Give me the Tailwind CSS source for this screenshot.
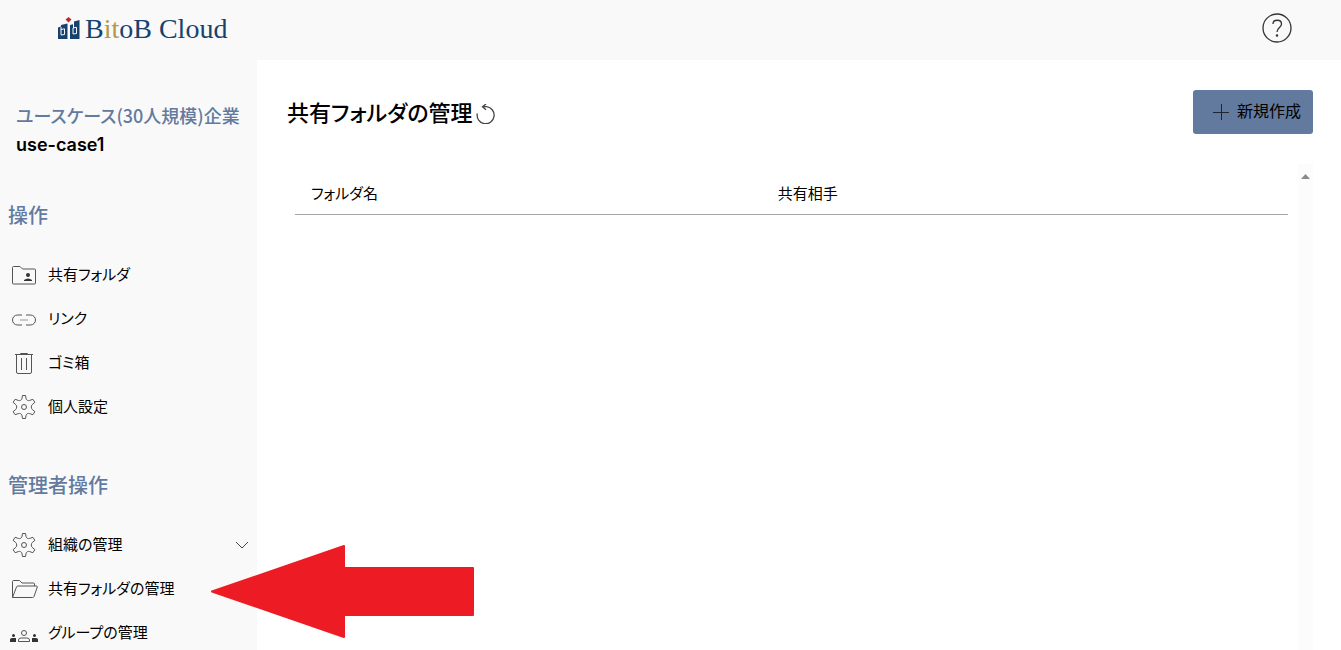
<!DOCTYPE html>
<html lang="ja">
<head>
    <meta charset="UTF-8">
    <meta name="viewport" content="width=device-width, initial-scale=1.0">
    <title>共有フォルダの管理 - BitoB Cloud</title>
    <script src="https://cdn.jsdelivr.net/npm/@tailwindcss/browser@4"></script>
</head>
<body class="h-screen overflow-hidden flex flex-col bg-white text-black font-['Noto_Sans_CJK_JP',sans-serif] [font-feature-settings:'palt']">
    <header class="h-[60px] shrink-0 flex items-center justify-between bg-[#f9f9f9] pl-[57px] pr-12">
        <a href="#" class="flex items-center gap-1 pb-0.5">
            <svg class="w-6 h-6" viewBox="0 0 24 24" aria-hidden="true">
                <path fill="#17426f" d="M1 10.500l3-1V8l6.500-1.500v15.500H1zM13 8l4-1V4.500L22.500 3v19H13z"/>
                <path fill="none" stroke="#f9f9f9" d="M4 18v-5.500l3.500-.7v5.700zM16 17v-6l3.500-.7v6.200zM16.500 7v4M4 10v3"/>
                <path fill="#c1272d" d="M11.500 0l3 2.500-3 3-3-3z"/>
            </svg>
            <span class="font-['Liberation_Serif',serif] text-[28px] leading-8 text-[#17426f]">B<span class="text-[#b39a45]">it</span>oB Cloud</span>
        </a>
        <button type="button" aria-label="ヘルプ" class="pb-1">
            <svg class="w-8 h-8" viewBox="0 0 32 32" fill="none" stroke="#333" stroke-width="1.300">
                <circle cx="16" cy="16" r="14"/>
                <path d="M12 12c0-5 8.500-5 8.500 0 0 3.500-4.500 3.500-4.500 8"/>
                <circle cx="16" cy="23.500" r=".6" fill="#333"/>
            </svg>
        </button>
    </header>

    <div class="flex flex-1 min-h-0">
        <aside class="w-[257px] shrink-0 overflow-hidden bg-[#f9f9f9] pt-10 text-[15px]">
            <div class="pl-4 text-lg leading-[30px] whitespace-nowrap">
                <p class="font-medium text-[#637a9f]">ユースケース(30人規模)企業</p>
                <p class="font-semibold font-['Inter',sans-serif]">use-case1</p>
            </div>

            <h2 class="mt-10 pl-2 text-xl leading-[30px] font-medium text-[#637a9f]">操作</h2>
            <ul class="mt-[23px]">
                <li>
                    <a href="#" class="h-11 flex items-center gap-3 pl-3">
                        <svg class="w-6 h-6" viewBox="0 0 24 24" fill="none" stroke="#555">
                            <path d="M.5 5V4.500q0-1 1-1h6.500l2.500 2.500h12q1 0 1 1v13q0 1-1 1h-21q-1 0-1-1z"/>
                            <circle cx="16" cy="12" r="2" fill="#333" stroke="none"/>
                            <path fill="#333" stroke="none" d="M12 18v-1q4-3 8 0v1z"/>
                        </svg>
                        <span class="pb-0.5">共有フォルダ</span>
                    </a>
                </li>
                <li>
                    <a href="#" class="h-11 flex items-center gap-3 pl-3">
                        <svg class="w-6 h-6" viewBox="0 0 24 24" fill="none" stroke="#555">
                            <path d="M10 8H5.500a5 5 0 0 0 0 10H10M14 8h4.500a5 5 0 0 1 0 10H14"/>
                            <path stroke="#999" d="M8 13h8"/>
                        </svg>
                        <span class="pb-0.5">リンク</span>
                    </a>
                </li>
                <li>
                    <a href="#" class="h-11 flex items-center gap-3 pl-3">
                        <svg class="w-6 h-6" viewBox="0 0 24 24" fill="none" stroke="#555">
                            <path d="M3 3.500h18M8.500 3.500v-1h7v1M4.500 4v17q0 1.500 1.500 1.500h12q1.500 0 1.500-1.500V4M9.500 7v12M14.500 7v12"/>
                        </svg>
                        <span class="pb-0.5">ゴミ箱</span>
                    </a>
                </li>
                <li>
                    <a href="#" class="h-11 flex items-center gap-3 pl-3">
                        <svg class="w-6 h-6" viewBox="0 0 24 24" fill="none" stroke="#555" stroke-linejoin="round">
                            <path d="M10.500.5h3l.6 3.300q.3 1 1.300 1.500 1 .6 2 .2l3.500-1.200 2 3-2.700 2.300q-.9.900-.9 2.400t.9 2.400l2.700 2.300-2 3-3.500-1.200q-1-.4-2 .2-1 .5-1.300 1.500l-.6 3.300h-3l-.6-3.300q-.3-1-1.300-1.500-1-.6-2-.2l-3.500 1.200-2-3 2.700-2.300q.9-.9.9-2.400t-.9-2.400L1.100 7.300l2-3 3.500 1.200q1 .4 2-.2 1-.5 1.300-1.500z"/>
                            <circle cx="12" cy="12" r="2.500"/>
                        </svg>
                        <span class="pb-0.5">個人設定</span>
                    </a>
                </li>
            </ul>

            <h2 class="mt-[41px] pl-2 text-xl leading-[30px] font-medium text-[#637a9f]">管理者操作</h2>
            <ul class="mt-[23px]">
                <li>
                    <button type="button" class="w-full h-11 flex items-center gap-3 pl-3 pr-2">
                        <svg class="w-6 h-6" viewBox="0 0 24 24" fill="none" stroke="#555" stroke-linejoin="round">
                            <path d="M10.500.5h3l.6 3.300q.3 1 1.300 1.500 1 .6 2 .2l3.500-1.200 2 3-2.700 2.300q-.9.900-.9 2.400t.9 2.400l2.700 2.300-2 3-3.500-1.200q-1-.4-2 .2-1 .5-1.300 1.500l-.6 3.300h-3l-.6-3.300q-.3-1-1.300-1.500-1-.6-2-.2l-3.500 1.200-2-3 2.700-2.300q.9-.9.9-2.400t-.9-2.400L1.100 7.300l2-3 3.500 1.200q1 .4 2-.2 1-.5 1.300-1.500z"/>
                            <circle cx="12" cy="12" r="2.500"/>
                        </svg>
                        <span class="pb-0.5">組織の管理</span>
                        <svg class="w-3.5 h-3.5 ml-auto" viewBox="0 0 14 14" fill="none" stroke="#444">
                            <path d="M1 4l6 6 6-6"/>
                        </svg>
                    </button>
                </li>
                <li>
                    <a href="#" class="h-11 flex items-center gap-2.5 pl-3">
                        <svg class="w-[26px] h-6" viewBox="0 0 26 24" fill="none" stroke="#555" stroke-linejoin="round">
                            <path d="M.5 20.500v-16q0-1 1-1h6l2.500 2.500h11.500q1 0 1 1V9"/>
                            <path d="M.5 20.500L4.500 10q.4-1 1.500-1h18.500q1 0 .8 1L22 19.500q-.4 1-1.500 1z"/>
                        </svg>
                        <span class="pb-0.5">共有フォルダの管理</span>
                    </a>
                </li>
                <li>
                    <a href="#" class="h-11 flex items-center gap-2.5 pl-2.5">
                        <svg class="w-7 h-6" viewBox="0 0 28 24" fill="none" stroke="#555">
                            <circle cx="14" cy="12" r="2.500"/>
                            <path d="M8.500 20.500V19q0-2 2.500-2h6q2.500 0 2.500 2v1.500z"/>
                            <g fill="#333" stroke="none">
                                <circle cx="3.500" cy="14.500" r="1.500"/>
                                <path d="M0 21v-2.500q0-1.500 2-1.500h4v4zM28 21v-2.500q0-1.500-2-1.500h-4v4z"/>
                                <circle cx="24.500" cy="14.500" r="1.500"/>
                            </g>
                        </svg>
                        <span class="pb-0.5">グループの管理</span>
                    </a>
                </li>
            </ul>
        </aside>

        <main class="flex-1 min-w-0 flex flex-col pt-[30px] pl-[30px] pr-7">
            <div class="h-11 shrink-0 flex items-center justify-between">
                <div class="flex items-center gap-1">
                    <h1 class="pb-0.5 text-[22px] leading-8 font-medium">共有フォルダの管理</h1>
                    <button type="button" aria-label="更新" class="pt-1">
                        <svg class="w-5 h-5" viewBox="0 0 20 20" fill="none" stroke="#444" stroke-width="1.300">
                            <path d="M1.300 9.500a8.500 8.500 0 1 0 9-6.800H6.500M10 0L6.500 2.700l3.500 3"/>
                        </svg>
                    </button>
                </div>
                <button type="button" class="h-11 flex items-center gap-2 pl-5 pr-3 rounded-[3px] bg-[#637a9f]">
                    <svg class="w-4 h-4" viewBox="0 0 16 16" fill="none" stroke="#1f2632">
                        <path d="M8.500 0v16M0 8.500h16"/>
                    </svg>
                    <span class="pb-1">新規作成</span>
                </button>
            </div>

            <div class="flex flex-1 min-h-0 mt-[30px]">
                <div class="flex-1 pl-2 pr-2.5">
                    <table class="w-full text-left table-fixed border-separate border-spacing-0 text-[15px]">
                        <thead>
                            <tr class="h-[51px]">
                                <th class="w-[47%] px-4 pt-2 font-normal border-b border-[#a6a6a6]">フォルダ名</th>
                                <th class="px-4 pt-2 font-normal border-b border-[#a6a6a6]">共有相手</th>
                            </tr>
                        </thead>
                        <tbody></tbody>
                    </table>
                </div>
                <div class="w-[15px] bg-[#fcfcfc] flex justify-center pt-2.5">
                    <svg class="w-[9px] h-[5px]" viewBox="0 0 9 5" fill="#8a8a8a"><path d="M0 5L4.500 0 9 5z"/></svg>
                </div>
            </div>
        </main>
    </div>

    <!-- callout arrow pointing at the shared folder menu item -->
    <svg class="absolute left-[210px] top-[545px] w-[264px] h-[93px]" viewBox="0 0 264 93" fill="#ed1c24" stroke="#ed1c24" stroke-width="2" stroke-linejoin="round">
        <path d="M2 46.500L134 1v22h129v47H134v22z"/>
    </svg>
</body>
</html>
